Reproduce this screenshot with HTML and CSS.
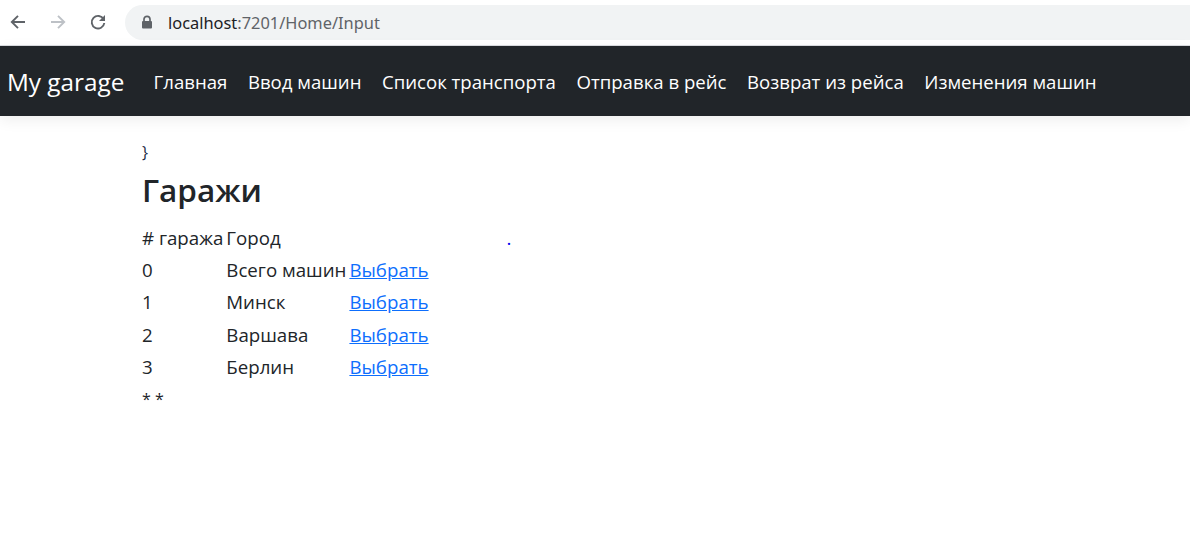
FILE: index.html
```html
<!DOCTYPE html>
<html lang="ru">
<head>
<meta charset="utf-8">
<title>My garage</title>
<link rel="stylesheet" href="styles.css">
</head>
<body>
<div class="chrome">
  <div class="nav-btns">
    <svg class="ic back" width="20" height="20" viewBox="0 0 20 20"><path d="M17 10H4.5M10 3.8L3.8 10l6.2 6.2" fill="none" stroke="#5f6368" stroke-width="1.9"/></svg>
    <svg class="ic fwd" width="20" height="20" viewBox="0 0 20 20"><path d="M3 10h12.5M10 3.8l6.2 6.2-6.2 6.2" fill="none" stroke="#bdc1c6" stroke-width="1.9"/></svg>
    <svg class="ic reload" width="20" height="20" viewBox="0 0 20 20"><path d="M15.6 7.2A6.3 6.3 0 1 0 16.3 11" fill="none" stroke="#5f6368" stroke-width="1.9"/><path d="M17 3v6h-6z" fill="#5f6368"/></svg>
  </div>
  <div class="omnibox">
    <svg class="lock" width="12" height="14" viewBox="0 0 12 14"><path d="M3 6V4.3a3 3 0 0 1 6 0V6" fill="none" stroke="#5f6368" stroke-width="1.7"/><rect x="1" y="6" width="10" height="7.5" rx="1" fill="#5f6368"/></svg>
    <span class="host">localhost</span><span class="path">:7201/Home/Input</span>
  </div>
</div>
<header class="navbar">
  <a class="brand" href="#">My garage</a>
  <nav class="links">
    <a href="#">Главная</a>
    <a href="#">Ввод машин</a>
    <a href="#">Список транспорта</a>
    <a href="#">Отправка в рейс</a>
    <a href="#">Возврат из рейса</a>
    <a href="#">Изменения машин</a>
  </nav>
</header>
<main class="content">
  <div class="brace">}</div>
  <h1 class="title">Гаражи</h1>
  <table class="garages">
    <thead>
      <tr><th>#&nbsp;гаража</th><th>Город</th><th><span class="dot">.</span></th></tr>
    </thead>
    <tbody>
      <tr><td>0</td><td>Всего машин</td><td><a href="#">Выбрать</a></td></tr>
      <tr><td>1</td><td>Минск</td><td><a href="#">Выбрать</a></td></tr>
      <tr><td>2</td><td>Варшава</td><td><a href="#">Выбрать</a></td></tr>
      <tr><td>3</td><td>Берлин</td><td><a href="#">Выбрать</a></td></tr>
    </tbody>
  </table>
  <div class="stars">* *</div>
</main>
</body>
</html>
```
FILE: styles.css
```css
* { box-sizing: border-box; }
html, body { margin: 0; padding: 0; background: #fff; }
body { font-family: "Open Sans", "Noto Sans", sans-serif; color: #212529; overflow: hidden; }

.chrome {
  height: 46px;
  display: flex;
  align-items: center;
  border-bottom: 1px solid #dadce0;
  padding-bottom: 1px;
}
.nav-btns { display: flex; gap: 20px; padding-left: 8px; align-items: center; }
.ic { display: block; }
.omnibox {
  margin-left: 17px;
  flex: 1;
  height: 35px;
  background: #f1f3f4;
  border-radius: 18px 0 0 18px;
  display: flex;
  align-items: center;
  padding-left: 16px;
  font-family: "Noto Sans", sans-serif;
  font-size: 16.4px;
}
.lock { margin-right: 15px; }
.host { color: #202124; }
.path { color: #5f6368; }

.navbar {
  height: 70px;
  background: #212529;
  display: flex;
  align-items: center;
  padding-left: 7px;
  box-shadow: 0 4px 14px rgba(0,0,0,0.07);
  position: relative;
}
.brand { color: #fff; text-decoration: none; font-size: 24.3px; margin-right: 19px; }
.links { display: flex; }
.links a { color: #fff; text-decoration: none; font-size: 18.6px; padding: 0 10.3px; }

.content { padding-left: 142px; padding-top: 26px; }
.brace { font-size: 16px; line-height: 20px; color: #1d2a44; }
.title { margin: 6px 0 9px; font-size: 31.5px; font-weight: 600; line-height: 44px; }
.garages { border-collapse: collapse; font-size: 18.7px; }
.garages th, .garages td { padding: 0 3px 0 0; text-align: left; font-weight: 400; height: 32.4px; vertical-align: middle; }
.garages td:last-child, .garages th:last-child { padding-right: 0; }
.garages a { color: #0d6efd; }
.dot { margin-left: 157px; color: #0000ee; }
.stars { font-size: 16px; line-height: 20px; padding-top: 6px; }
```
